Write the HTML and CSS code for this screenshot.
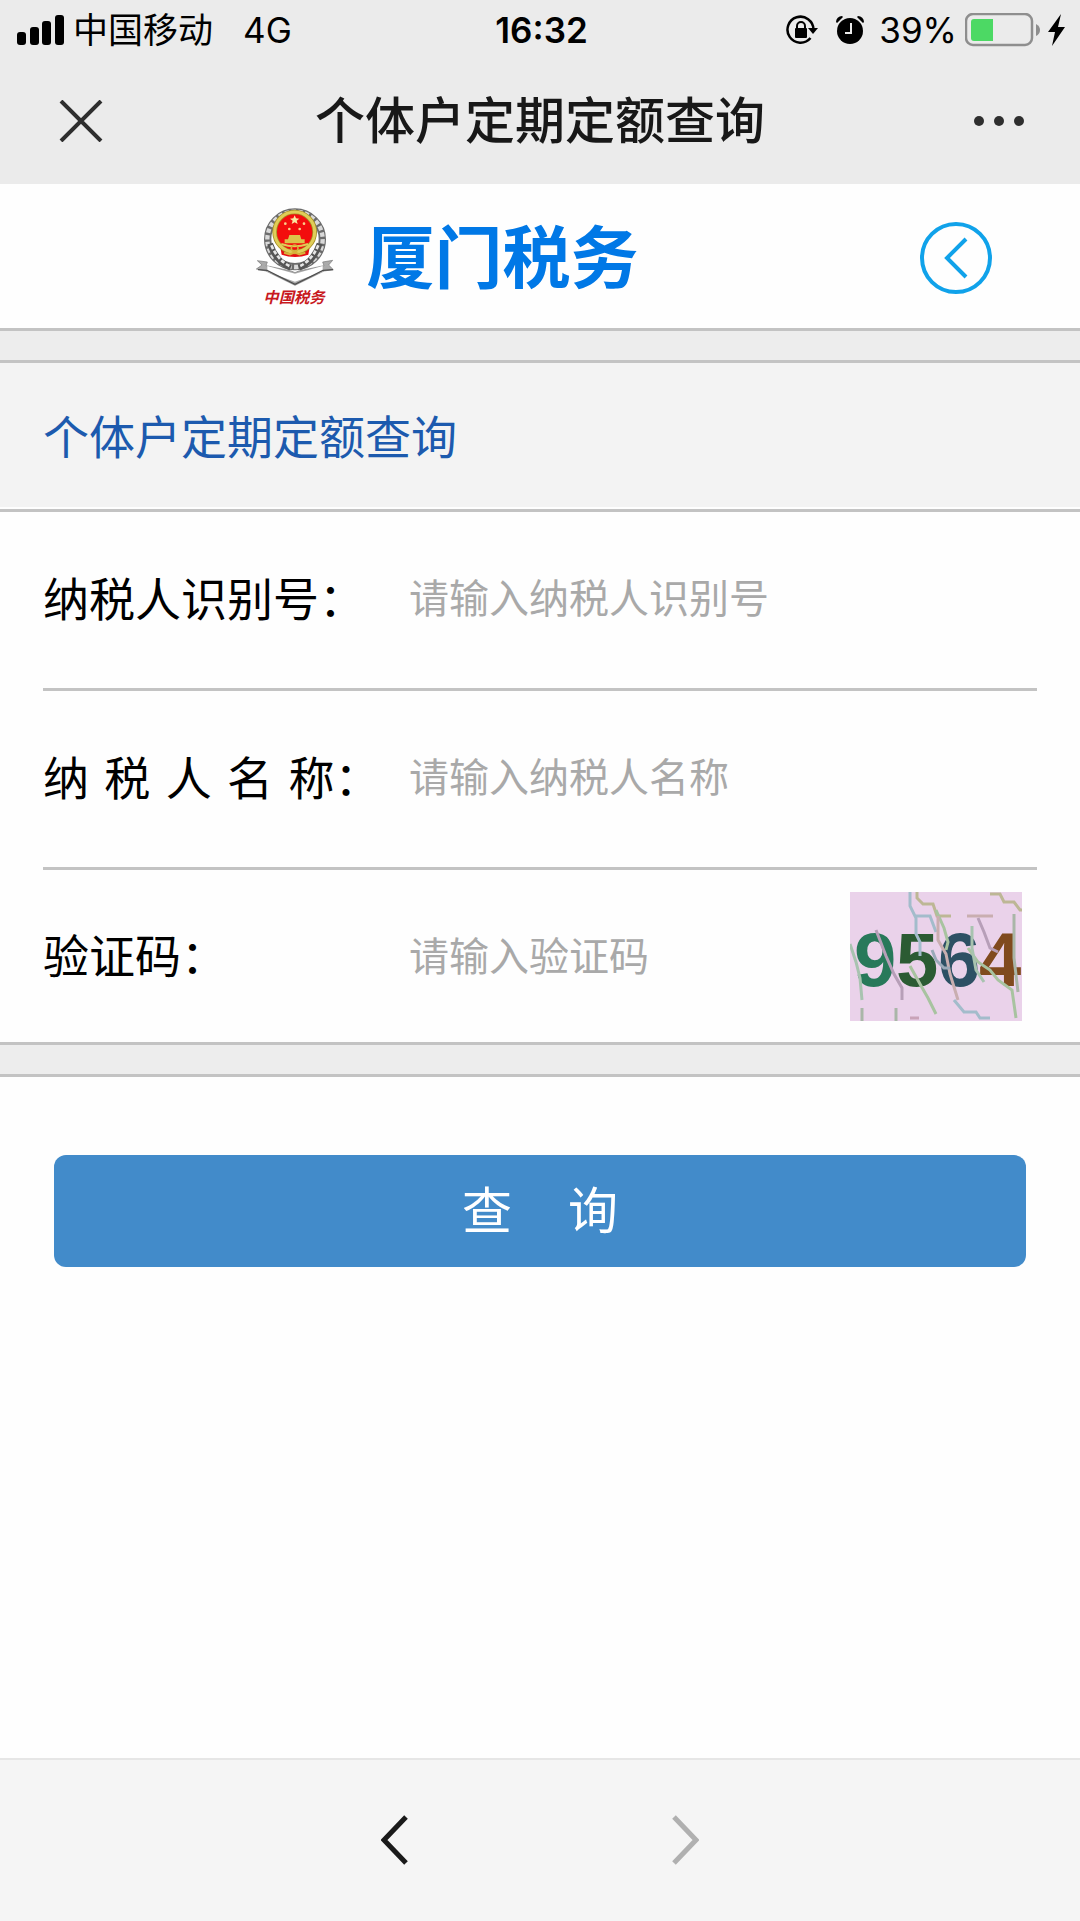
FILE: index.html
```html
<!DOCTYPE html>
<html lang="zh-CN">
<head>
    <meta charset="UTF-8">
    <meta name="viewport" content="width=device-width, initial-scale=1.0">
    <title>个体户定期定额查询</title>
    <link rel="stylesheet" href="styles.css">
</head>
<body>

<header class="top">
    <div class="status">
        <div class="status-left">
            <svg class="signal" width="48" height="30" viewBox="0 0 48 30">
                <rect x="0" y="17" width="9" height="13" rx="3"/>
                <rect x="13" y="12" width="9" height="18" rx="3"/>
                <rect x="25" y="6" width="9" height="24" rx="3"/>
                <rect x="38" y="0" width="9" height="30" rx="3"/>
            </svg>
            <span class="carrier">中国移动</span>
            <span>4G</span>
        </div>
        <div class="status-time">16:32</div>
        <div class="status-right">
            <svg class="lock" width="34" height="32" viewBox="0 0 34 32">
                <path d="M28.500 15.500A13 13 0 1 0 25.500 24" fill="none" stroke="#000" stroke-width="2.500"/>
                <path d="M23 14h10l-5 6z"/>
                <rect x="10" y="14" width="12" height="10" rx="1"/>
                <path d="M12 15v-3a4 4 0 0 1 8 0v3" fill="none" stroke="#000" stroke-width="2"/>
            </svg>
            <svg class="alarm" width="28" height="30" viewBox="0 0 28 30">
                <circle cx="14" cy="16" r="13"/>
                <path d="M0 7a6 6 0 0 1 6-6l1 1-6 6zM28 7a6 6 0 0 0-6-6l-1 1 6 6z"/>
                <path d="M15 8v10H9" fill="none" stroke="#ebebeb" stroke-width="2"/>
            </svg>
            <span class="percent">39%</span>
            <svg class="battery" width="76" height="34" viewBox="0 0 76 34">
                <rect x="1" y="1" width="66" height="31" rx="7" fill="none" stroke="#8e8e8e" stroke-width="2.500"/>
                <path d="M9 6h19v22H9a3 3 0 0 1-3-3V9a3 3 0 0 1 3-3z" fill="#4cd964"/>
                <path d="M71 11q4 2 4 6t-4 6z" fill="#8e8e8e"/>
            </svg>
            <svg class="bolt" width="18" height="32" viewBox="0 0 18 32">
                <path d="M13 0L0 18h7L4 32 17 13h-7z"/>
            </svg>
        </div>
    </div>
    <div class="nav">
        <button type="button" class="icon-btn" aria-label="关闭">
            <svg width="56" height="42" viewBox="-7 0 56 42"><path d="M1 1L41 41M41 1L1 41"/></svg>
        </button>
        <h1>个体户定期定额查询</h1>
        <button type="button" class="icon-btn" aria-label="更多">
            <svg class="dots" width="56" height="12" viewBox="0 0 56 12">
                <circle cx="8" cy="6" r="5"/>
                <circle cx="28" cy="6" r="5"/>
                <circle cx="48" cy="6" r="5"/>
            </svg>
        </button>
    </div>
</header>

<div class="brand">
    <svg class="emblem" width="92" height="112" viewBox="0 0 276 336">
        <!-- 麦穗 -->
        <circle cx="135" cy="112" r="82" fill="none" stroke="#6c6c6c" stroke-width="22"/>
        <circle cx="135" cy="112" r="83" fill="none" stroke="#d9d9d9" stroke-width="13" stroke-dasharray="13 7"/>
        <path d="M60 125q18 54 62 72M209 125q-18 54-62 72" fill="none" stroke="#555" stroke-width="18"/>
        <path d="M64 130q20 46 58 64M205 130q-20 46-58 64" fill="none" stroke="#e6e6e6" stroke-width="8" stroke-dasharray="12 6"/>
        <path d="M22 176l30 4-4 11 76 16 11 5 11-5 76-16-4-11 30-5-12 14 14 14-28 4-87 43-87-43-29-6 17-12z" fill="#aaa" stroke="#777" stroke-width="2"/>
        <path d="M52 192l83 23 83-23v17l-83 30-83-30z" fill="#fff"/>
        <path d="M24 203l27 2 84 42 84-42 30-2" fill="none" stroke="#4d4d4d" stroke-width="4"/>
        <!-- 徽章 -->
        <path d="M88 120h94l-7 38q-40 14-80 0z" fill="#e60f12"/>
        <circle cx="134" cy="90" r="60" fill="#f30d0d" stroke="#a58e25" stroke-width="14"/>
        <circle cx="134" cy="90" r="60" fill="none" stroke="#e0cd58" stroke-width="9"/>
        <path d="M134 40l4 9 10 1-8 6 3 10-9-5-9 5 3-10-8-6 10-1z" fill="#fbe8a0"/>
        <circle cx="106" cy="65" r="4" fill="#fbcf8a"/>
        <circle cx="162" cy="65" r="4" fill="#fbcf8a"/>
        <circle cx="118" cy="81" r="4" fill="#fbcf8a"/>
        <circle cx="149" cy="81" r="4" fill="#fbcf8a"/>
        <path d="M118 99h32l4 13h10v12h-60v-12h10z" fill="#dcc34a"/>
        <path d="M94 126q40 14 80 0" fill="none" stroke="#e0cd58" stroke-width="6"/>
        <circle cx="134" cy="139" r="10" fill="none" stroke="#d8b13a" stroke-width="5"/>
        <path d="M102 152l18 5 14-6 14 6 18-5" fill="none" stroke="#d8b13a" stroke-width="6"/>
        <text x="40" y="302" class="emblem-text">中国税务</text>
    </svg>
    <span class="brand-name">厦门税务</span>
    <a href="#" class="back" aria-label="返回">
        <svg width="72" height="72" viewBox="0 0 72 72">
            <circle cx="36" cy="36" r="34"/>
            <path d="M46 17L27 36l19 19"/>
        </svg>
    </a>
</div>

<div class="band"></div>

<h2>个体户定期定额查询</h2>

<form class="query-form">
    <div class="fields">
        <div class="row">
            <label for="nsrsbh">纳税人识别号：</label>
            <input type="text" id="nsrsbh" name="nsrsbh" placeholder="请输入纳税人识别号">
        </div>
        <div class="row">
            <label for="nsrmc">纳&emsp13;税&emsp13;人&emsp13;名&emsp13;称：</label>
            <input type="text" id="nsrmc" name="nsrmc" placeholder="请输入纳税人名称">
        </div>
        <div class="row">
            <label for="yzm">验证码：</label>
            <input type="text" id="yzm" name="yzm" placeholder="请输入验证码">
            <svg class="captcha" width="172" height="129" viewBox="0 0 172 129">
                <rect width="172" height="129" fill="#ead2ea"/>
                <g class="digits">
                    <text x="4" y="94" fill="#28795a">9</text>
                    <text x="46" y="94" fill="#2b5b33">5</text>
                    <text x="88" y="94" fill="#2d5064">6</text>
                    <text x="129" y="94" fill="#804a1e">4</text>
                </g>
                <!-- 干扰线 -->
                <g class="noise">
                    <path d="M60 0v14l6 12v16l4 8v14" stroke="#a3bccb"/>
                    <path d="M66 24h14l6 16" stroke="#a3bccb"/>
                    <path d="M67 0v6l6 6h10l4 12h14" stroke="#bdb795"/>
                    <path d="M86 18l8 18 4 14-2 8" stroke="#a8c3a0"/>
                    <path d="M140 2h10l4 8h10l6 8h4" stroke="#bdb795" stroke-width="5"/>
                    <path d="M117 24h26M88 24v24l8 14 4 20 8 26" stroke="#c9aeb0"/>
                    <path d="M0 52l6 18 4 16 2 22" stroke="#a8c3b0"/>
                    <path d="M26 38l10 26 8 18 8 14v12" stroke="#b79fb8"/>
                    <path d="M60 74l10 18 8 14 8 16" stroke="#a8c3a0"/>
                    <path d="M82 58l4 10 8 8h6" stroke="#9aa9b8"/>
                    <path d="M128 26l6 14 6 16 8 4" stroke="#b79fb8"/>
                    <path d="M118 56l10 14 12 8 8 10 14 10 4 28" stroke="#a8c3a0"/>
                    <path d="M122 34v22l4 22 8 12" stroke="#a8c3b0"/>
                    <path d="M164 22v44l4 34M46 116v13M12 116v13" stroke="#a9b6a8"/>
                    <path d="M104 108l10 12h12l4 6h10" stroke="#a3bccb" stroke-width="5"/>
                    <path d="M60 126h9" stroke="#c9a3b8" stroke-width="6"/>
                </g>
            </svg>
        </div>
    </div>

    <div class="band"></div>

    <button type="submit" class="submit">查&nbsp;&nbsp;&nbsp;&nbsp;询</button>
</form>

<footer class="toolbar">
    <button type="button" class="icon-btn" aria-label="后退">
        <svg width="28" height="52" viewBox="0 0 28 52"><path d="M25 3L3 26l22 23"/></svg>
    </button>
    <button type="button" class="icon-btn" aria-label="前进" disabled>
        <svg width="28" height="52" viewBox="0 0 28 52"><path d="M3 3l22 23L3 49"/></svg>
    </button>
</footer>

</body>
</html>
```

FILE: styles.css
```css
* {
    box-sizing: border-box;
}
body {
    margin: 0;
    min-height: 100vh;
    display: flex;
    flex-direction: column;
    background-color: #fefefe;
    color: #000;
    font-family: Inter, "Noto Sans CJK SC", sans-serif;
}
svg {
    display: block;
    flex: none;
}
h1, h2 {
    margin: 0;
}
.icon-btn {
    display: flex;
    padding: 0;
    border: none;
    background: none;
    cursor: pointer;
}
.icon-btn path {
    fill: none;
    stroke: #2e2e2e;
    stroke-width: 4;
}

/* 顶部 */
.top {
    background-color: #ebebeb;
}
.status {
    display: grid;
    grid-template-columns: 1fr auto 1fr;
    align-items: center;
    height: 60px;
    padding: 0 14px 0 17px;
    font-size: 35px;
    line-height: 60px;
}
.status-left, .status-right {
    display: flex;
    align-items: center;
}
.status-right {
    justify-content: flex-end;
}
.carrier {
    margin: 0 30px 0 8px;
}
.status-time {
    font-weight: 600;
}
.lock {
    margin-right: 17px;
}
.alarm {
    margin-right: 15px;
}
.percent {
    margin-right: 8px;
}
.battery {
    margin-right: 7px;
}
.nav {
    display: grid;
    grid-template-columns: 1fr auto 1fr;
    align-items: center;
    height: 124px;
    padding: 0 53px 2px;
}
.nav .icon-btn:last-child {
    justify-self: end;
}
.nav h1 {
    color: #181818;
    font-size: 50px;
    font-weight: 500;
    line-height: 72px;
}
.dots {
    fill: #2e2e2e;
}

/* 标志 */
.brand {
    display: flex;
    align-items: center;
    height: 144px;
    padding: 4px 88px 0 23%;
}
.emblem {
    margin-left: 2px;
}
.emblem-text {
    fill: #c8191e;
    font-size: 46px;
    font-style: italic;
    font-weight: 700;
}
.brand-name {
    margin-left: 24px;
    color: #0078e6;
    font-size: 68px;
    font-weight: 700;
    line-height: 96px;
}
.back {
    margin-left: auto;
}
.back circle, .back path {
    fill: none;
    stroke: #10a2ea;
    stroke-width: 4;
}

.band {
    height: 35px;
    border-top: 3px solid #c3c3c3;
    border-bottom: 3px solid #c3c3c3;
    background-color: #ededed;
}
h2 {
    padding: 38px 43px 36px;
    border-bottom: 3px solid #c3c3c3;
    background-color: #f3f3f3;
    box-shadow: inset 0 -2px #fefefe;
    color: #1c5aae;
    font-size: 46px;
    font-weight: 400;
    line-height: 72px;
}

/* 表单 */
.query-form {
    flex: 1;
}
.fields {
    padding: 0 43px;
}
.row {
    display: flex;
    align-items: center;
    height: 179px;
    padding-bottom: 3px;
    border-bottom: 3px solid #c3c3c3;
}
.row:last-child {
    height: 172px;
    padding-bottom: 0;
    border-bottom: none;
}
.row label {
    flex: none;
    width: 366px;
    font-size: 46px;
    line-height: 64px;
    white-space: nowrap;
}
.row input {
    flex: 1;
    min-width: 0;
    padding: 0;
    border: none;
    outline: none;
    background: none;
    color: #000;
    font-family: inherit;
    font-size: 40px;
}
.row input::placeholder {
    color: #a9a9a9;
}
.captcha {
    margin-right: 15px;
}
.noise path {
    fill: none;
    stroke-width: 3;
}
.digits {
    font-family: "Liberation Sans", sans-serif;
    font-size: 76px;
    font-weight: 700;
}
.submit {
    display: block;
    width: calc(100% - 108px);
    margin: 78px 54px;
    padding: 20px 0;
    border: none;
    border-radius: 12px;
    background-color: #428bca;
    color: #fff;
    font-family: inherit;
    font-size: 50px;
    line-height: 72px;
    cursor: pointer;
}

/* 底部工具栏 */
.toolbar {
    display: flex;
    justify-content: center;
    align-items: center;
    gap: 262px;
    height: 163px;
    padding-bottom: 2px;
    border-top: 2px solid #e6e6e6;
    background-color: #f5f5f5;
}
.toolbar .icon-btn path {
    stroke: #1a1a1a;
    stroke-width: 5;
}
.toolbar .icon-btn:disabled path {
    stroke: #b0b0b0;
}
```
